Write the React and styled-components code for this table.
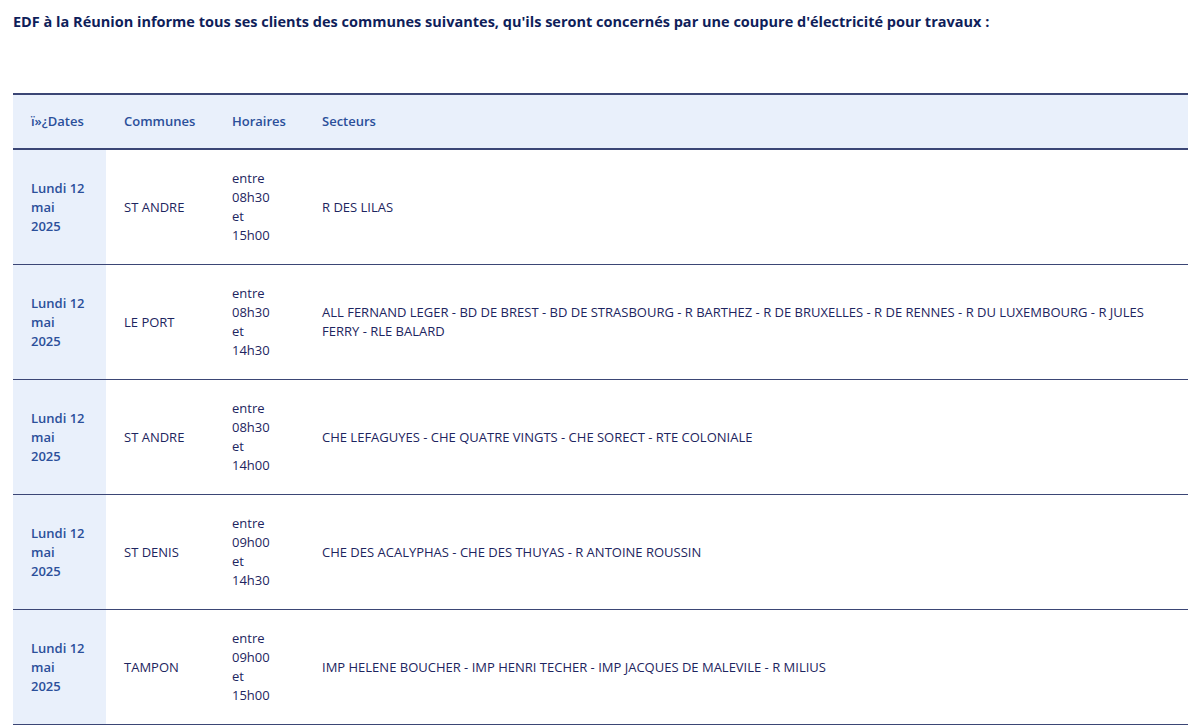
import React from "react";
import styled, { createGlobalStyle } from "styled-components";

const Global = createGlobalStyle`
  html, body { margin: 0; padding: 0; background: #ffffff; }
  body { font-family: "Open Sans", "Liberation Sans", sans-serif; }
`;

const Page = styled.div`
  padding: 12px 12px 0 13px;
  width: 1200px;
  box-sizing: border-box;
`;

const Title = styled.p`
  margin: 0 0 62px 0;
  font-size: 14.5px;
  font-weight: 700;
  color: #0f1e5a;
  line-height: 19px;
`;

const Table = styled.table`
  width: 1175px;
  border-collapse: collapse;
  table-layout: fixed;
  font-size: 13px;
  line-height: 19px;
`;

const HeadRow = styled.tr`
  background: #e9f0fb;
  border-top: 2px solid #3b4675;
  border-bottom: 2px solid #3b4675;
`;

const Th = styled.th`
  text-align: left;
  font-weight: 600;
  color: #2b4f9a;
  height: 55px;
  padding: 0 18px;
  box-sizing: border-box;
`;

const Row = styled.tr`
  border-bottom: 1.5px solid #3b4675;
`;

const Td = styled.td`
  padding: 19px ${(p) => p.$padRight || 18}px 19px 18px;
  height: 115px;
  box-sizing: border-box;
  vertical-align: middle;
  color: #1d2560;
`;

const DateCell = styled(Td)`
  background: #e9f0fb;
  color: #2b4f9a;
  font-weight: 600;
`;

const rows = [
  { commune: "ST ANDRE", from: "08h30", to: "15h00", secteurs: "R DES LILAS" },
  {
    commune: "LE PORT",
    from: "08h30",
    to: "14h30",
    secteurs:
      "ALL FERNAND LEGER - BD DE BREST - BD DE STRASBOURG - R BARTHEZ - R DE BRUXELLES - R DE RENNES - R DU LUXEMBOURG - R JULES FERRY - RLE BALARD",
  },
  {
    commune: "ST ANDRE",
    from: "08h30",
    to: "14h00",
    secteurs: "CHE LEFAGUYES - CHE QUATRE VINGTS - CHE SORECT - RTE COLONIALE",
  },
  {
    commune: "ST DENIS",
    from: "09h00",
    to: "14h30",
    secteurs: "CHE DES ACALYPHAS - CHE DES THUYAS - R ANTOINE ROUSSIN",
  },
  {
    commune: "TAMPON",
    from: "09h00",
    to: "15h00",
    secteurs: "IMP HELENE BOUCHER - IMP HENRI TECHER - IMP JACQUES DE MALEVILE - R MILIUS",
  },
];

export default function App() {
  return (
    <>
      <Global />
      <Page>
        <Title>
          EDF à la Réunion informe tous ses clients des communes suivantes, qu'ils seront concernés par une coupure d'électricité pour travaux :
        </Title>
        <Table>
          <colgroup>
            <col style={{ width: 93 }} />
            <col style={{ width: 108 }} />
            <col style={{ width: 90 }} />
            <col />
          </colgroup>
          <thead>
            <HeadRow>
              <Th>ï»¿Dates</Th>
              <Th>Communes</Th>
              <Th>Horaires</Th>
              <Th>Secteurs</Th>
            </HeadRow>
          </thead>
          <tbody>
            {rows.map((r, i) => (
              <Row key={i}>
                <DateCell $padRight={20}>Lundi 12 mai 2025</DateCell>
                <Td>{r.commune}</Td>
                <Td $padRight={28}>entre {r.from} et {r.to}</Td>
                <Td>{r.secteurs}</Td>
              </Row>
            ))}
          </tbody>
        </Table>
      </Page>
    </>
  );
}
